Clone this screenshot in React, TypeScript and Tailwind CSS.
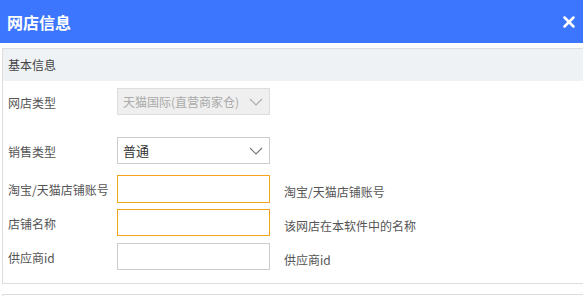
import { X } from "lucide-react";

const font = { fontFamily: '"Microsoft YaHei", "Noto Sans CJK SC", "Noto Sans", sans-serif' };

const Chevron = ({ color }: { color: string }) => (
	<svg width="14" height="8" viewBox="0 0 14 8" fill="none">
		<polyline points="1,1 7,7 13,1" stroke={color} strokeWidth="1.1" />
	</svg>
);

const Row = ({ label, hint, children, className }: { label: string; hint?: string; children: React.ReactNode; className: string }) => (
	<div className={`flex items-center ${className}`}>
		<div className="w-[114px] pl-[5px] pt-[2px] text-[12px] text-[#555]">{label}</div>
		{children}
		{hint && <div className="ml-[14px] pt-[6px] text-[12px] text-[#555]">{hint}</div>}
	</div>
);

const App = () => {
	return (
		<div className="w-[583px] h-[296px] overflow-hidden bg-white" style={font}>
			<div className="h-[43px] bg-[#3d76fe] flex items-center justify-between pl-[7px] pr-[5px]">
				<span className="text-white text-[16px] font-bold">网店信息</span>
				<X size={18} strokeWidth={3.4} className="text-white" />
			</div>
			<div className="pt-[5px] pl-[2px]">
				<div className="w-[600px] border border-[#dddddd] pb-[13px]">
					<div className="h-[32px] bg-[#eef2f5] flex items-center pl-[5px] text-[12px] text-[#444]">基本信息</div>
					<Row label="网店类型" className="mt-[7px]">
						<div className="w-[153px] h-[27px] border border-[#dddddd] bg-[#efefef] flex items-center justify-between pl-[5px] pr-[6px]">
							<span className="text-[12px] text-[#aaaaaa]">天猫国际(直营商家仓)</span>
							<Chevron color="#aaaaaa" />
						</div>
					</Row>
					<Row label="销售类型" className="mt-[22px]">
						<div className="w-[153px] h-[27px] border border-[#cccccc] bg-white flex items-center justify-between pl-[5px] pr-[6px]">
							<span className="text-[13px] text-[#333]">普通</span>
							<Chevron color="#777777" />
						</div>
					</Row>
					<Row label="淘宝/天猫店铺账号" hint="淘宝/天猫店铺账号" className="mt-[11px]">
						<div className="w-[153px] h-[28px] border border-[#f3a41c] bg-white"></div>
					</Row>
					<Row label="店铺名称" hint="该网店在本软件中的名称" className="mt-[6px]">
						<div className="w-[153px] h-[27px] border border-[#f3a41c] bg-white"></div>
					</Row>
					<Row label="供应商id" hint="供应商id" className="mt-[7px]">
						<div className="w-[153px] h-[27px] border border-[#cccccc] bg-white"></div>
					</Row>
				</div>
				<div className="w-[600px] h-[10px] mt-[10px] border border-[#dddddd]"></div>
			</div>
		</div>
	);
};

export default App;
